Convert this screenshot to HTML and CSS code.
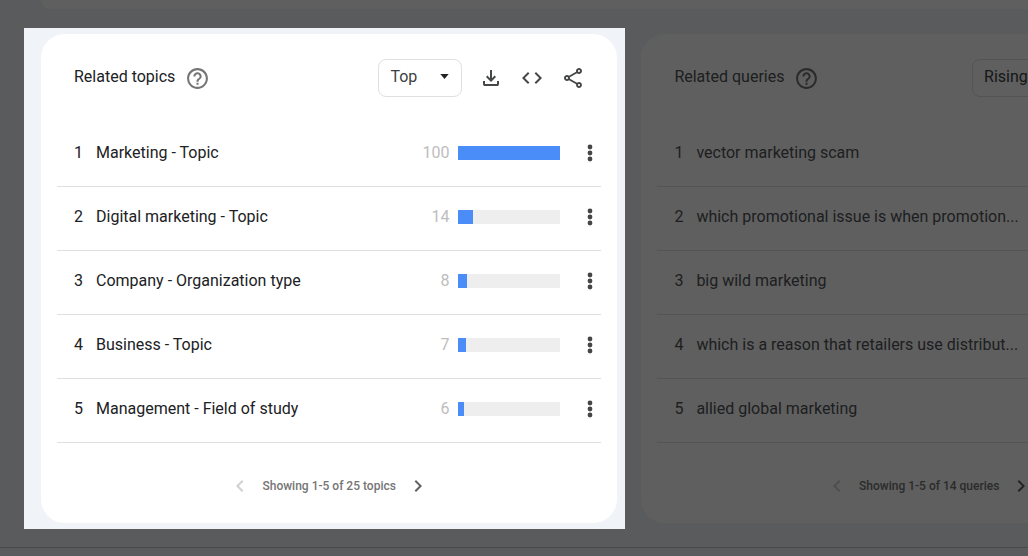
FILE: index.html
```html
<!DOCTYPE html>
<html lang="en">
<head>
<meta charset="utf-8">
<title>Related topics and queries</title>
<link rel="stylesheet" href="styles.css">
</head>
<body>
<svg class="sprite" aria-hidden="true">
  <symbol id="help" viewBox="0 0 24 24"><path d="M11 18h2v-2h-2v2zm1-16C6.480 2 2 6.480 2 12s4.480 10 10 10 10-4.480 10-10S17.520 2 12 2zm0 18c-4.410 0-8-3.590-8-8s3.590-8 8-8 8 3.590 8 8-3.590 8-8 8zm0-14c-2.210 0-4 1.790-4 4h2c0-1.100.9-2 2-2s2 .9 2 2c0 2-3 1.750-3 5h2c0-2.250 3-2.500 3-5 0-2.210-1.790-4-4-4z"/></symbol>
  <symbol id="download" viewBox="0 0 24 24"><path d="M12 16l-5-5 1.400-1.450 2.600 2.600V4h2v8.150l2.600-2.600L17 11zM6 20q-.825 0-1.412-.587Q4 18.825 4 18v-3h2v3h12v-3h2v3q0 .825-.587 1.413Q18.825 20 18 20z"/></symbol>
  <symbol id="code" viewBox="0 0 24 24"><path d="M9.400 16.600L4.800 12l4.600-4.600L8 6l-6 6 6 6 1.400-1.400zm5.200 0l4.600-4.600-4.600-4.600L16 6l6 6-6 6-1.400-1.400z"/></symbol>
  <symbol id="share" viewBox="0 0 24 24"><path d="M18 16.080c-.76 0-1.440.3-1.960.77L8.910 12.700c.05-.23.09-.46.09-.7s-.04-.47-.09-.7l7.050-4.110c.54.5 1.250.81 2.040.81 1.660 0 3-1.340 3-3s-1.340-3-3-3-3 1.340-3 3c0 .24.04.47.09.7L8.040 9.810C7.500 9.310 6.790 9 6 9c-1.660 0-3 1.340-3 3s1.340 3 3 3c.79 0 1.500-.31 2.040-.81l7.120 4.160c-.05.21-.08.43-.08.65 0 1.610 1.310 2.920 2.920 2.920s2.920-1.310 2.920-2.920-1.310-2.920-2.920-2.920zM18 4c.55 0 1 .45 1 1s-.45 1-1 1-1-.45-1-1 .45-1 1-1zM6 13c-.55 0-1-.45-1-1s.45-1 1-1 1 .45 1 1-.45 1-1 1zm12 7.020c-.55 0-1-.45-1-1s.45-1 1-1 1 .45 1 1-.45 1-1 1z"/></symbol>
  <symbol id="more" viewBox="0 0 24 24"><circle cx="12" cy="6" r="2.400"/><circle cx="12" cy="12" r="2.400"/><circle cx="12" cy="18" r="2.400"/></symbol>
  <symbol id="prev" viewBox="0 0 24 24"><path d="M15.410 7.410L14 6l-6 6 6 6 1.410-1.410L10.830 12z"/></symbol>
  <symbol id="next" viewBox="0 0 24 24"><path d="M10 6L8.590 7.410 13.170 12l-4.580 4.590L10 18l6-6z"/></symbol>
  <symbol id="caret" viewBox="0 0 10 6"><path d="M0 0h10L5 6z"/></symbol>
</svg>
<main class="page">
  <div class="previous-card"></div>
  <div class="panels">
    <div class="spotlight">
      <section class="card" aria-labelledby="topics-title">
        <header class="card-header">
          <h2 class="card-title" id="topics-title">Related topics</h2>
          <button class="icon-button help" aria-label="Help"><svg><use href="#help"/></svg></button>
          <div class="actions">
            <span class="picker">
              <select class="picker-select" aria-label="Sort topics"><option>Top</option><option>Rising</option></select>
              <svg class="picker-caret"><use href="#caret"/></svg>
            </span>
            <button class="icon-button" aria-label="Download"><svg><use href="#download"/></svg></button>
            <button class="icon-button" aria-label="Embed"><svg><use href="#code"/></svg></button>
            <button class="icon-button" aria-label="Share"><svg><use href="#share"/></svg></button>
          </div>
        </header>
        <ol class="rows">
          <li class="row"><span class="rank">1</span><span class="label">Marketing - Topic</span><span class="value">100</span><span class="bar"><span class="fill" style="width:100%"></span></span><button class="icon-button more" aria-label="More"><svg><use href="#more"/></svg></button></li>
          <li class="row"><span class="rank">2</span><span class="label">Digital marketing - Topic</span><span class="value">14</span><span class="bar"><span class="fill" style="width:14%"></span></span><button class="icon-button more" aria-label="More"><svg><use href="#more"/></svg></button></li>
          <li class="row"><span class="rank">3</span><span class="label">Company - Organization type</span><span class="value">8</span><span class="bar"><span class="fill" style="width:8%"></span></span><button class="icon-button more" aria-label="More"><svg><use href="#more"/></svg></button></li>
          <li class="row"><span class="rank">4</span><span class="label">Business - Topic</span><span class="value">7</span><span class="bar"><span class="fill" style="width:7%"></span></span><button class="icon-button more" aria-label="More"><svg><use href="#more"/></svg></button></li>
          <li class="row"><span class="rank">5</span><span class="label">Management - Field of study</span><span class="value">6</span><span class="bar"><span class="fill" style="width:6%"></span></span><button class="icon-button more" aria-label="More"><svg><use href="#more"/></svg></button></li>
        </ol>
        <footer class="pager">
          <button class="icon-button page-arrow" aria-label="Previous" disabled><svg><use href="#prev"/></svg></button>
          <span>Showing 1-5 of 25 topics</span>
          <button class="icon-button page-arrow" aria-label="Next"><svg><use href="#next"/></svg></button>
        </footer>
      </section>
    </div>
    <section class="card card-queries" aria-labelledby="queries-title">
      <header class="card-header">
        <h2 class="card-title" id="queries-title">Related queries</h2>
        <button class="icon-button help" aria-label="Help"><svg><use href="#help"/></svg></button>
        <div class="actions">
          <span class="picker">
            <select class="picker-select picker-wide" aria-label="Sort queries"><option>Rising</option><option>Top</option></select>
            <svg class="picker-caret"><use href="#caret"/></svg>
          </span>
          <button class="icon-button" aria-label="Download"><svg><use href="#download"/></svg></button>
          <button class="icon-button" aria-label="Embed"><svg><use href="#code"/></svg></button>
          <button class="icon-button" aria-label="Share"><svg><use href="#share"/></svg></button>
        </div>
      </header>
      <ol class="rows">
        <li class="row"><span class="rank">1</span><span class="label">vector marketing scam</span></li>
        <li class="row"><span class="rank">2</span><span class="label">which promotional issue is when promotion...</span></li>
        <li class="row"><span class="rank">3</span><span class="label">big wild marketing</span></li>
        <li class="row"><span class="rank">4</span><span class="label">which is a reason that retailers use distribut...</span></li>
        <li class="row"><span class="rank">5</span><span class="label">allied global marketing</span></li>
      </ol>
      <footer class="pager">
        <button class="icon-button page-arrow" aria-label="Previous" disabled><svg><use href="#prev"/></svg></button>
        <span>Showing 1-5 of 14 queries</span>
        <button class="icon-button page-arrow" aria-label="Next"><svg><use href="#next"/></svg></button>
      </footer>
    </section>
  </div>
  <hr class="divider">
</main>
</body>
</html>
```
FILE: styles.css
```css
* { box-sizing: border-box; }

body {
  margin: 0;
  background: #f0f4f9;
  color: #202124;
  font: 16px/24px Roboto, "Liberation Sans", sans-serif;
}

.sprite { position: absolute; width: 0; height: 0; }

.page {
  min-height: 100vh;
  overflow: hidden;
}

.previous-card {
  height: 9px;
  margin-left: 41px;
  border-radius: 0 0 0 24px;
  background: #fff;
}

.panels {
  display: flex;
  align-items: flex-start;
  gap: 16px;
  padding: 19px 0 18px 24px;
}

/* The lit panel; its spread shadow dims everything around it. */
.spotlight {
  position: relative;
  z-index: 1;
  flex: 0 0 58.5vw;
  padding: 6px 8px 6px 17px;
  background: #f0f4f9;
  box-shadow: 0 0 0 200vmax rgba(0, 0, 0, 0.627);
}

.card {
  padding: 0 16px;
  border-radius: 24px;
  background: #fff;
}

.card-queries {
  flex: 0 0 56vw;
  margin-top: 6px;
  color: #505357;
}

.card-header {
  display: flex;
  align-items: center;
  height: 88px;
  margin-bottom: 1px;
  padding: 0 16px 0 17px;
}

.card-title {
  margin: 0 10px 0 0;
  padding-bottom: 2px;
  font-size: 16px;
  font-weight: 400;
}

.actions {
  display: flex;
  align-items: center;
  gap: 17px;
  margin-left: auto;
}

.icon-button {
  display: block;
  flex: none;
  width: 24px;
  height: 24px;
  padding: 0;
  border: 0;
  background: none;
  color: #444746;
}

.icon-button svg {
  display: block;
  width: 100%;
  height: 100%;
  fill: currentColor;
}

.help {
  width: 25px;
  height: 25px;
  color: #757575;
}

.picker { position: relative; display: flex; }

.picker-select {
  width: 84px;
  height: 38px;
  padding: 0 11px 2px;
  border: 1px solid #e0e0e0;
  border-radius: 8px;
  background: #fff;
  color: #3c4043;
  font: inherit;
  appearance: none;
}

.picker-wide { width: 90px; }

.picker-caret {
  position: absolute;
  top: 15px;
  right: 13px;
  width: 9px;
  height: 5px;
  fill: #202124;
  pointer-events: none;
}

.rows {
  margin: 0;
  padding: 0;
  list-style: none;
}

.row {
  display: flex;
  align-items: center;
  height: 64px;
  padding: 0 0 4px 17px;
  border-bottom: 1px solid #e0e0e0;
}

.rank { flex: 0 0 22px; }

.label {
  flex: 1;
  white-space: nowrap;
}

.value {
  margin-right: 9px;
  color: #bdbdbd;
}

.bar {
  flex: 0 0 102px;
  height: 14px;
  background: #eee;
}

.fill {
  display: block;
  height: 100%;
  background: #4b8df8;
}

.more {
  width: 24px;
  margin: 0 -1px 0 18px;
}

.pager {
  display: flex;
  align-items: center;
  justify-content: center;
  gap: 10px;
  height: 80px;
  padding-top: 6px;
  color: #757575;
  font-size: 12px;
  font-weight: 500;
}

.page-arrow { color: #616161; }
.page-arrow:disabled { color: #d0d0d0; }

.divider {
  height: 1px;
  margin: 0;
  border: 0;
  background: #c4c7cc;
}
```
